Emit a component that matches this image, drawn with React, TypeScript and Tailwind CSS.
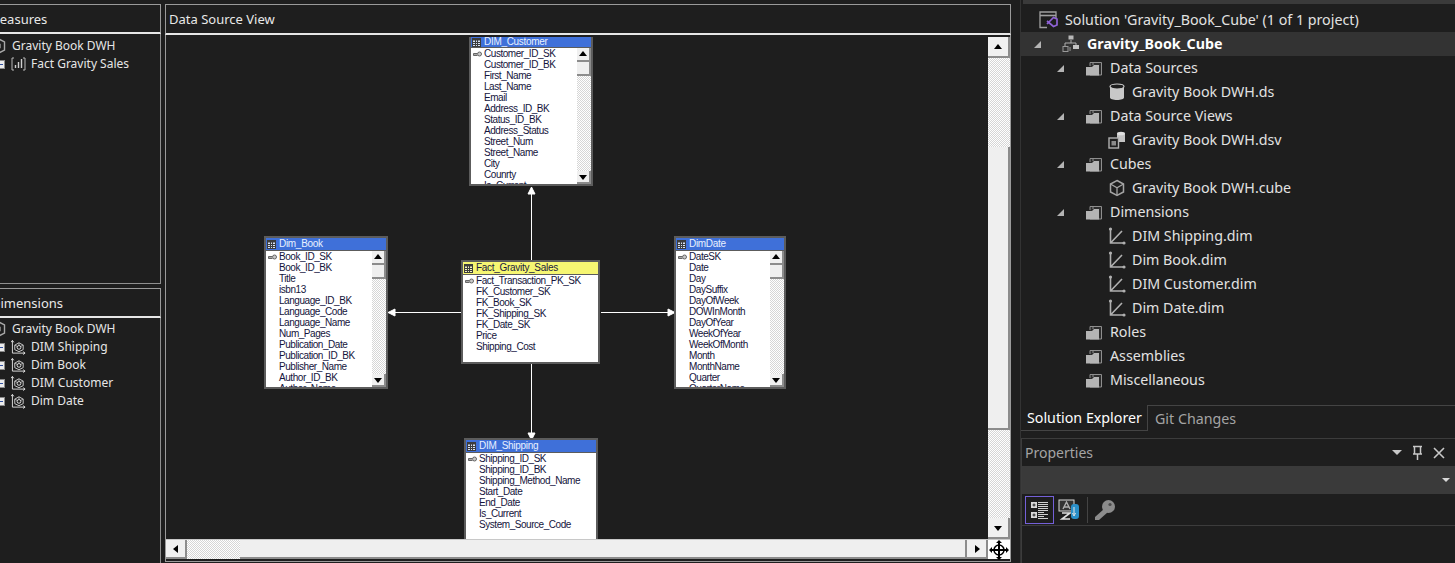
import React from "react";

const ui = "font-['Noto_Sans',sans-serif]";
const mono = "font-['Liberation_Sans',sans-serif]";

function Tri({ dir, size = 7 }: { dir: "up" | "down" | "left" | "right"; size?: number }) {
  const pts = { up: "4,1 8,6 0,6", down: "0,2 8,2 4,7", left: "6,0 6,8 1,4", right: "2,0 2,8 7,4" }[dir];
  return (
    <svg width={size + 1} height={size + 1} viewBox="0 0 8 8">
      <polygon points={pts} fill="#000" />
    </svg>
  );
}

function ScrollBtn({ dir, cls }: { dir: "up" | "down" | "left" | "right"; cls: string }) {
  return (
    <div className={`flex shrink-0 items-center justify-center bg-[#f0f0f0] border-r-2 border-b-2 border-[#8c8c8c] ${cls}`}>
      <Tri dir={dir} />
    </div>
  );
}

const checker = "bg-[repeating-conic-gradient(#d6d6d6_0_25%,#ffffff_0_50%)] bg-[length:2px_2px]";

function GridIcon({ color = "#d8e2f5" }: { color?: string }) {
  return (
    <svg width="9" height="9" viewBox="0 0 9 9" className="shrink-0">
      <rect x="0.5" y="0.5" width="8" height="8" fill={color} stroke="#3c3c3c" />
      <rect x="0.5" y="0.5" width="8" height="2" fill="#3c3c3c" />
      <path d="M3.5 2V8M5.5 2V8M1 4.5H8M1 6.5H8" stroke="#3c3c3c" strokeWidth="1" />
    </svg>
  );
}

function KeyIcon() {
  return (
    <svg width="9" height="6" viewBox="0 0 9 6" className="block shrink-0">
      <circle cx="6.5" cy="3" r="2" fill="#c9c9c9" stroke="#666" />
      <path d="M4.5 2.5H0.5V4.5H4.5" fill="#a8a8a8" stroke="#666" strokeWidth="1" />
    </svg>
  );
}

type NodeProps = {
  title: string;
  rows: string[];
  cls: string;
  yellow?: boolean;
  scroll?: boolean;
  headH?: string;
};

function TableNode({ title, rows, cls, yellow, scroll, headH = "h-[12px]" }: NodeProps) {
  return (
    <div className={`absolute flex flex-col overflow-hidden border-2 border-[#5c5c5c] bg-white ${cls}`}>
      <div className={`flex ${headH} shrink-0 items-center gap-[3px] pl-[1px] ${yellow ? "bg-[#f6f672] text-[#1b1b40]" : "bg-[#3f70d9] text-[#e8f0ff]"} text-[10px] leading-none tracking-[-0.3px] ${mono}`}>
        <GridIcon color={yellow ? "#f6f6c0" : "#d8e2f5"} />
        <span>{title}</span>
      </div>
      <div className="flex min-h-0 flex-1 border-t border-[#5c5c5c] bg-white">
        <div className={`min-w-0 flex-1 overflow-hidden ${mono} text-[10px] leading-[11px] tracking-[-0.45px] text-[#14143c]`}>
          {rows.map((r, i) => (
            <div key={r} className="relative h-[11px] whitespace-nowrap pl-[13px]">
              {i === 0 && (
                <span className="absolute left-[2px] top-[3px]">
                  <KeyIcon />
                </span>
              )}
              {r}
            </div>
          ))}
        </div>
        {scroll && (
          <div className="flex w-[14px] shrink-0 flex-col">
            <ScrollBtn dir="up" cls="h-[14px]" />
            <div className="h-[14px] shrink-0 bg-[#efefef] border-r-2 border-b-2 border-[#8c8c8c]" />
            <div className={`flex-1 ${checker}`} />
            <ScrollBtn dir="down" cls="h-[13px]" />
          </div>
        )}
      </div>
    </div>
  );
}

function Arrows() {
  return (
    <svg className="absolute left-0 top-0" width="822" height="504" viewBox="0 0 822 504">
      <g stroke="#ffffff" strokeWidth="1" fill="#ffffff">
        <path d="M365.5 156V224" />
        <polygon points="365.5,150 369,157 362,157" />
        <path d="M365.5 327V396" />
        <polygon points="365.5,403 362,396 369,396" />
        <path d="M228 275.5H295" />
        <polygon points="222,275.5 229,272 229,279" />
        <path d="M435 275.5H503" />
        <polygon points="509,275.5 502,272 502,279" />
      </g>
    </svg>
  );
}

function HexIcon() {
  return (
    <svg width="18" height="18" viewBox="0 0 18 18" className="shrink-0">
      <path d="M9 1L16.5 5V13L9 17L1.5 13V5Z" fill="none" stroke="#a8a8a8" strokeWidth="1.4" />
      <path d="M9 5L12.5 7V11L9 13L5.5 11V7Z" fill="none" stroke="#777" strokeWidth="1" />
    </svg>
  );
}

function MinusBox() {
  return (
    <div className="flex h-[9px] w-[9px] shrink-0 items-center justify-center border border-[#8a8a8a] bg-[#ececec]">
      <div className="h-px w-[5px] bg-[#3050a0]" />
    </div>
  );
}

function BarsIcon() {
  return (
    <svg width="15" height="14" viewBox="0 0 15 14" className="shrink-0">
      <path d="M3 1H1V13H3M12 1H14V13H12" fill="none" stroke="#b8b8b8" />
      <path d="M4.5 11V8M7.5 11V5M10.5 11V2" stroke="#cfcfcf" strokeWidth="1.4" />
    </svg>
  );
}

function DimCubeIcon() {
  return (
    <svg width="15" height="16" viewBox="0 0 16 16" className="shrink-0">
      <path d="M1.5 1V14.5H15" fill="none" stroke="#e0e0e0" />
      <path d="M0 3L1.5 1L3 3M13 13L15 14.5L13 16" fill="none" stroke="#e0e0e0" />
      <path d="M8.5 3.5L13 6V10.8L8.5 13L4 10.8V6Z" fill="none" stroke="#d0d0d0" />
      <circle cx="8.5" cy="8.4" r="2" fill="none" stroke="#e8e8e8" />
      <path d="M8.5 3.5V6.4M4 6L6.7 7.4M13 6L10.3 7.4" stroke="#b0b0b0" />
    </svg>
  );
}

function LeftRow({ label, icon, minus }: { label: string; icon: React.ReactNode; minus?: boolean }) {
  return (
    <div className={`flex h-[18px] items-center whitespace-nowrap text-[12px] text-[#e6e6e6] ${ui}`}>
      {minus ? (
        <div className="flex items-center">
          <div className="-ml-[4px] mr-[6px]">
            <MinusBox />
          </div>
          {icon}
          <span className="ml-[5px]">{label}</span>
        </div>
      ) : (
        <div className="-ml-[12px] flex items-center">
          {icon}
          <span className="ml-[6px]">{label}</span>
        </div>
      )}
    </div>
  );
}

function PaneHeader({ label, shift }: { label: string; shift: string }) {
  return (
    <div className={`h-[30px] shrink-0 overflow-hidden border-t border-r border-[#9a9a9a] border-b-2 border-b-[#e6e6e6] text-[13px] leading-[29px] whitespace-nowrap text-[#e8e8e8] ${ui}`}>
      <span className={`inline-block ${shift}`}>{label}</span>
    </div>
  );
}

function LeftColumn() {
  return (
    <div className="flex w-[161px] shrink-0 flex-col pt-[4px]">
      <PaneHeader label="Measures" shift="-ml-[12px]" />
      <div className="h-[250px] shrink-0 border-r border-b border-[#8f8f8f] pt-[3px]">
        <LeftRow label="Gravity Book DWH" icon={<HexIcon />} />
        <LeftRow label="Fact Gravity Sales" icon={<BarsIcon />} minus />
      </div>
      <div className="h-[4px] shrink-0" />
      <PaneHeader label="Dimensions" shift="-ml-[9px]" />
      <div className="min-h-0 flex-1 border-r border-[#8f8f8f] pt-[2px]">
        <LeftRow label="Gravity Book DWH" icon={<HexIcon />} />
        {["DIM Shipping", "Dim Book", "DIM Customer", "Dim Date"].map((l) => (
          <LeftRow key={l} label={l} icon={<DimCubeIcon />} minus />
        ))}
      </div>
    </div>
  );
}

const customerRows = ["Customer_ID_SK", "Customer_ID_BK", "First_Name", "Last_Name", "Email", "Address_ID_BK", "Status_ID_BK", "Address_Status", "Street_Num", "Street_Name", "City", "Counrty", "Is_Current"];
const bookRows = ["Book_ID_SK", "Book_ID_BK", "Title", "isbn13", "Language_ID_BK", "Language_Code", "Language_Name", "Num_Pages", "Publication_Date", "Publication_ID_BK", "Publisher_Name", "Author_ID_BK", "Author_Name"];
const factRows = ["Fact_Transaction_PK_SK", "FK_Customer_SK", "FK_Book_SK", "FK_Shipping_SK", "FK_Date_SK", "Price", "Shipping_Cost"];
const dateRows = ["DateSK", "Date", "Day", "DaySuffix", "DayOfWeek", "DOWInMonth", "DayOfYear", "WeekOfYear", "WeekOfMonth", "Month", "MonthName", "Quarter", "QuarterName"];
const shipRows = ["Shipping_ID_SK", "Shipping_ID_BK", "Shipping_Method_Name", "Start_Date", "End_Date", "Is_Current", "System_Source_Code"];

function CenterColumn() {
  return (
    <div className="ml-[4px] flex w-[846px] shrink-0 flex-col pt-[4px]">
      <div className={`h-[31px] shrink-0 border-t border-l border-r border-[#9a9a9a] border-b-2 border-b-[#e6e6e6] pl-[3px] text-[13px] leading-[29px] text-[#e8e8e8] ${ui}`}>
        Data Source View
      </div>
      <div className="flex h-[527px] shrink-0 flex-col border-l border-r border-[#9a9a9a] pt-[2px]">
        <div className="flex min-h-0 flex-1">
          <div className="relative min-w-0 flex-1 overflow-hidden bg-[#1e1e1e]">
            <Arrows />
            <TableNode title="DIM_Customer" rows={customerRows} cls="left-[303px] -top-[2px] h-[151px] w-[124px]" scroll headH="h-[10px]" />
            <TableNode title="Dim_Book" rows={bookRows} cls="left-[98px] top-[199px] h-[153px] w-[124px]" scroll />
            <TableNode title="Fact_Gravity_Sales" rows={factRows} cls="left-[295px] top-[223px] h-[104px] w-[139px]" yellow />
            <TableNode title="DimDate" rows={dateRows} cls="left-[508px] top-[199px] h-[153px] w-[112px]" scroll />
            <TableNode title="DIM_Shipping" rows={shipRows} cls="left-[298px] top-[401px] h-[120px] w-[134px]" />
          </div>
          <div className="flex w-[22px] shrink-0 flex-col bg-white">
            <ScrollBtn dir="up" cls="h-[21px]" />
            <div className={`h-[89px] ${checker}`} />
            <div className="h-[283px] bg-[#efefef] border-r-2 border-b-2 border-[#8c8c8c]" />
            <div className={`flex-1 ${checker}`} />
            <ScrollBtn dir="down" cls="h-[21px]" />
          </div>
        </div>
        <div className="flex h-[20px] shrink-0 border-t border-[#c8c8c8]">
          <ScrollBtn dir="left" cls="w-[21px]" />
          <div className={`w-[53px] ${checker}`} />
          <div className="flex-1 bg-[#efefef] border-r-2 border-b-2 border-[#8c8c8c]" />
          <ScrollBtn dir="right" cls="w-[21px]" />
          <div className="flex w-[22px] shrink-0 items-center justify-center bg-white">
            <svg width="20" height="20" viewBox="0 0 20 20">
              <path d="M10 3V17M3 10H17" stroke="#000" strokeWidth="2" />
              <circle cx="10" cy="10" r="5" fill="none" stroke="#000" strokeWidth="1.5" />
              <path d="M10 0L13 3H7ZM10 20L7 17H13ZM0 10L3 7V13ZM20 10L17 13V7Z" fill="#000" />
            </svg>
          </div>
        </div>
        <div className="h-[3px] shrink-0 border-b border-[#9a9a9a]" />
      </div>
    </div>
  );
}

function FolderIcon() {
  return (
    <svg width="18" height="17" viewBox="0 0 18 17" className="shrink-0">
      <path d="M5 6V2.5H16.5V15H5" fill="#2c2c2c" stroke="#8e8e8e" />
      <path d="M1 15.5V7H7L9 5H14V15.5Z" fill="#b4b4b4" />
      <path d="M8 2.5V5" stroke="#8e8e8e" />
    </svg>
  );
}

function Db() {
  return (
    <svg width="18" height="18" viewBox="-1 0 18 18" className="shrink-0">
      <path d="M1 3.5V14.5C1 16 4 17 8 17S15 16 15 14.5V3.5Z" fill="#c8c8c8" />
      <ellipse cx="8" cy="3.5" rx="7" ry="2.5" fill="#1e1e1e" stroke="#c8c8c8" strokeWidth="1.2" />
    </svg>
  );
}

function Dsv() {
  return (
    <svg width="18" height="18" viewBox="0 0 18 18" className="shrink-0">
      <path d="M9 2.5V11H17V2.5Z" fill="#c4c4c4" />
      <ellipse cx="13" cy="2.5" rx="4" ry="1.8" fill="#e0e0e0" />
      <rect x="1" y="7" width="9.5" height="10" fill="#1e1e1e" stroke="#b0b0b0" strokeWidth="1.4" />
      <rect x="3.5" y="10" width="4.5" height="4.5" fill="#8a8a8a" />
    </svg>
  );
}

function Cube() {
  return (
    <svg width="18" height="18" viewBox="0 0 18 18" className="shrink-0">
      <path d="M9 1.5L15.5 5V13L9 16.5L2.5 13V5Z" fill="none" stroke="#a4a4a4" strokeWidth="1.5" />
      <path d="M2.5 5L9 8.8L15.5 5M9 8.8V16.5" fill="none" stroke="#a4a4a4" strokeWidth="1.3" />
    </svg>
  );
}

function DimAxes() {
  return (
    <svg width="18" height="18" viewBox="0 0 18 18" className="shrink-0">
      <path d="M2.5 2V16H16M2.5 16L14 4" fill="none" stroke="#b0b0b0" strokeWidth="1.6" />
      <circle cx="2.5" cy="2" r="1.6" fill="#b0b0b0" />
      <circle cx="16" cy="16" r="1.6" fill="#b0b0b0" />
    </svg>
  );
}

function SolutionIcon() {
  return (
    <svg width="20" height="18" viewBox="0 0 20 18" className="shrink-0">
      <path d="M8 16.5H1V1H17V7" fill="none" stroke="#a0a0a0" strokeWidth="1.3" />
      <path d="M1 4.5H17" stroke="#a0a0a0" strokeWidth="1.6" />
      <path d="M8 10L14.5 15.5L18 14V8L14.5 6.5L8 13" fill="none" stroke="#8f62d6" strokeWidth="1.7" />
    </svg>
  );
}

function ProjectIcon() {
  return (
    <svg width="18" height="18" viewBox="0 0 18 18" className="shrink-0">
      <rect x="6.5" y="0.5" width="5" height="4" fill="#b8b8b8" />
      <path d="M9 5V8M3 12V8H14V10" fill="none" stroke="#b0b0b0" />
      <rect x="1" y="11.5" width="5" height="5" fill="#333" stroke="#9a9a9a" />
      <rect x="11" y="10" width="6" height="4" fill="#c4c4c4" />
      <path d="M8 16V12" stroke="#9a9a9a" />
    </svg>
  );
}

function Arrow() {
  return (
    <svg width="9" height="9" viewBox="0 0 9 9" className="shrink-0">
      <polygon points="8,1 8,8 1,8" fill="#b4b4b4" />
    </svg>
  );
}

type TreeItem = { label: string; icon: React.ReactNode; level: number; open?: boolean; bold?: boolean; sel?: boolean };

const tree: TreeItem[] = [
  { label: "Solution 'Gravity_Book_Cube' (1 of 1 project)", icon: <SolutionIcon />, level: 0 },
  { label: "Gravity_Book_Cube", icon: <ProjectIcon />, level: 1, open: true, bold: true, sel: true },
  { label: "Data Sources", icon: <FolderIcon />, level: 2, open: true },
  { label: "Gravity Book DWH.ds", icon: <Db />, level: 3 },
  { label: "Data Source Views", icon: <FolderIcon />, level: 2, open: true },
  { label: "Gravity Book DWH.dsv", icon: <Dsv />, level: 3 },
  { label: "Cubes", icon: <FolderIcon />, level: 2, open: true },
  { label: "Gravity Book DWH.cube", icon: <Cube />, level: 3 },
  { label: "Dimensions", icon: <FolderIcon />, level: 2, open: true },
  { label: "DIM Shipping.dim", icon: <DimAxes />, level: 3 },
  { label: "Dim Book.dim", icon: <DimAxes />, level: 3 },
  { label: "DIM Customer.dim", icon: <DimAxes />, level: 3 },
  { label: "Dim Date.dim", icon: <DimAxes />, level: 3 },
  { label: "Roles", icon: <FolderIcon />, level: 2 },
  { label: "Assemblies", icon: <FolderIcon />, level: 2 },
  { label: "Miscellaneous", icon: <FolderIcon />, level: 2 },
];

const levelPad: Record<number, string> = { 0: "pl-[18px]", 1: "pl-[12px]", 2: "pl-[35px]", 3: "pl-[87px]" };
const levelGap: Record<number, string> = { 0: "gap-[6px]", 1: "gap-[7px]", 2: "gap-[7px]", 3: "gap-[6px]" };

function TreeRow({ item }: { item: TreeItem }) {
  return (
    <div className={`flex h-[24px] items-center whitespace-nowrap text-[14.25px] ${levelPad[item.level]} ${item.sel ? "bg-[#333333]" : ""} ${item.bold ? "font-bold text-white" : "text-[#e2e2e2]"}`}>
      {(item.level === 1 || item.level === 2) && (
        <span className={`mr-[20px] flex shrink-0 ${item.open ? "" : "invisible"}`}>
          <Arrow />
        </span>
      )}
      <span className={`flex items-center ${levelGap[item.level]}`}>
        {item.icon}
        <span>{item.label}</span>
      </span>
    </div>
  );
}

function RightColumn() {
  return (
    <div className={`ml-[9px] flex min-w-0 flex-1 flex-col border-l border-[#333] ${ui}`}>
      <div className="ml-[2px] h-[4px] shrink-0 bg-[#3a3a3a]" />
      <div className="h-[4px] shrink-0" />
      <div className="h-[384px] shrink-0">
        {tree.map((t) => (
          <TreeRow key={t.label} item={t} />
        ))}
      </div>
      <div className="h-[13px] shrink-0" />
      <div className="flex h-[26px] shrink-0 text-[14.25px] leading-[26px]">
        <div className="w-[127px] shrink-0 border-r border-b border-[#444] pl-[6px] text-white">Solution Explorer</div>
        <div className="flex-1 border-t border-[#444] pl-[7px] text-[#a4a4a4]">Git Changes</div>
      </div>
      <div className="h-[7px] shrink-0" />
      <div className="flex min-h-0 flex-1 flex-col border-t border-l border-[#3c3c3c]">
        <div className="flex h-[27px] shrink-0 items-center pl-[3px] pr-[7px] text-[14px] text-[#a4a4a4]">
          <span className="flex-1">Properties</span>
          <svg width="60" height="16" viewBox="0 0 60 16">
            <polygon points="4,5 14,5 9,10" fill="#c8c8c8" />
            <path d="M25 1.5H34M26.5 1.5V9H32.5V1.5M25 9H34M29.5 9V15" fill="none" stroke="#c8c8c8" strokeWidth="1.5" />
            <path d="M46 3L56 13M56 3L46 13" stroke="#c8c8c8" strokeWidth="1.6" />
          </svg>
        </div>
        <div className="flex h-[28px] shrink-0 items-center justify-end bg-[#3a3a3a] pr-[5px]">
          <svg width="8" height="5" viewBox="0 0 8 5">
            <polygon points="0,0 8,0 4,4" fill="#d8d8d8" />
          </svg>
        </div>
        <div className="flex h-[32px] shrink-0 items-center border-b border-[#3c3c3c] pl-[3px]">
          <div className="flex h-[28px] w-[29px] items-center justify-center border border-[#7460d8]">
            <svg width="20" height="20" viewBox="0 0 20 20">
              <rect x="1" y="2" width="6" height="6" fill="#d8d8d8" />
              <rect x="1" y="12" width="6" height="6" fill="#d8d8d8" />
              <path d="M2.5 5H5.5M4 3.5V6.5M2.5 15H5.5M4 13.5V16.5" stroke="#222" />
              <path d="M8 2.5H18M8 4.5H18M8 6.5H18M8 8.5H18M8 10.5H18M8 12.5H14M8 14.5H18M8 16.5H14M8 18.5H18" stroke="#d0d0d0" />
            </svg>
          </div>
          <svg width="22" height="22" viewBox="0 0 22 22" className="ml-[4px]">
            <rect x="1" y="1" width="15" height="11" fill="#333" stroke="#d8d8d8" />
            <path d="M5 10L8.5 3L12 10M6 8H11" fill="none" stroke="#b0b0b0" strokeWidth="1.4" />
            <path d="M4 14H12L4 20H12" fill="none" stroke="#e0e0e0" strokeWidth="1.6" />
            <rect x="13" y="5" width="8" height="15" rx="3" fill="#2a8fc8" />
            <path d="M16 8V15M14.5 14L16 17L17.5 14" fill="none" stroke="#e8e8e8" />
          </svg>
          <div className="ml-[7px] h-[26px] w-px bg-[#444]" />
          <svg width="22" height="22" viewBox="0 0 22 22" className="ml-[6px]">
            <circle cx="14.5" cy="7.5" r="6.5" fill="#8c8c8c" />
            <circle cx="16" cy="5.5" r="1.6" fill="#4c4c4c" />
            <path d="M10 10L1 18V21H5L14 13Z" fill="#8c8c8c" />
          </svg>
        </div>
      </div>
    </div>
  );
}

export default function App() {
  return (
    <div className={`flex h-[563px] w-[1455px] overflow-hidden bg-[#1e1e1e] ${ui}`}>
      <LeftColumn />
      <CenterColumn />
      <RightColumn />
    </div>
  );
}
